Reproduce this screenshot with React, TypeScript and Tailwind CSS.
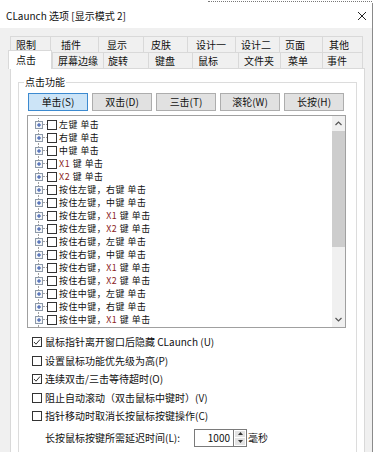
import React from 'react';

const row1 = [
  { label: '限制', cls: 'w-[40px] pl-[5px]' },
  { label: '插件', cls: 'w-[48px] pl-[10px]' },
  { label: '显示', cls: 'w-[45px] pl-[8px]' },
  { label: '皮肤', cls: 'w-[44px] pl-[7px]' },
  { label: '设计一', cls: 'w-[48px] pl-[8px]' },
  { label: '设计二', cls: 'w-[44px] pl-[5px]' },
  { label: '页面', cls: 'w-[43px] pl-[5px]' },
  { label: '其他', cls: 'w-[41px] pl-[6px] border-r' },
];

const row2 = [
  { label: '屏幕边缘', cls: 'w-[51px] pl-[5px]' },
  { label: '旋转', cls: 'w-[45px] pl-[4px]' },
  { label: '键盘', cls: 'w-[44px] pl-[6px]' },
  { label: '鼠标', cls: 'w-[46px] pl-[5px]' },
  { label: '文件夹', cls: 'w-[42px] pl-[5px]' },
  { label: '菜单', cls: 'w-[42px] pl-[7px]' },
  { label: '事件', cls: 'w-[41px] pl-[4px] border-r' },
];

const buttons = ['单击(S)', '双击(D)', '三击(T)', '滚轮(W)', '长按(H)'];

// [prefix, extra button (X1/X2) or null, rest]
const items: [string, string | null, string][] = [
  ['左键 单击', null, ''],
  ['右键 单击', null, ''],
  ['中键 单击', null, ''],
  ['', 'X1', ' 键 单击'],
  ['', 'X2', ' 键 单击'],
  ['按住左键，右键 单击', null, ''],
  ['按住左键，中键 单击', null, ''],
  ['按住左键，', 'X1', ' 键 单击'],
  ['按住左键，', 'X2', ' 键 单击'],
  ['按住右键，左键 单击', null, ''],
  ['按住右键，中键 单击', null, ''],
  ['按住右键，', 'X1', ' 键 单击'],
  ['按住右键，', 'X2', ' 键 单击'],
  ['按住中键，左键 单击', null, ''],
  ['按住中键，右键 单击', null, ''],
  ['按住中键，', 'X1', ' 键 单击'],
  ['', null, ''],
];

const options = [
  { label: '鼠标指针离开窗口后隐藏 CLaunch (U)', checked: true },
  { label: '设置鼠标功能优先级为高(P)', checked: false },
  { label: '连续双击/三击等待超时(O)', checked: true },
  { label: '阻止自动滚动（双击鼠标中键时）(V)', checked: false },
  { label: '指针移动时取消长按鼠标按键操作(C)', checked: false },
];

function CheckBox({ checked }: { checked?: boolean }) {
  return (
    <div className="w-[10px] h-[10px] border border-[#333333] bg-white flex items-center justify-center shrink-0">
      {checked && (
        <svg width="8" height="8" viewBox="0 0 8 8">
          <polyline points="1,4 3,6.2 7,1.5" fill="none" stroke="#333" strokeWidth="1" />
        </svg>
      )}
    </div>
  );
}

function TreeRow({ item }: { item: [string, string | null, string] }) {
  const [pre, x, rest] = item;
  const empty = !pre && !x && !rest;
  return (
    <div className="h-[13px] flex items-center">
      <div className="ml-[7px] w-[8px] h-full relative flex items-center shrink-0">
        <div className="absolute left-[3px] top-0 bottom-0 border-l border-dotted border-[#a0a0a0]" />
        <div className="relative w-[8px] h-[8px] border border-[#8e9aa8] bg-[#f4f6f8] flex items-center justify-center">
          <svg width="6" height="6" viewBox="0 0 6 6">
            <path d="M1 3H5M3 1V5" stroke="#2b4fa8" strokeWidth="1" />
          </svg>
        </div>
      </div>
      <div className="w-[4px] border-t border-dotted border-[#a0a0a0]" />
      <CheckBox />
      {!empty && (
        <span className="block ml-[2px] h-[13px] text-[8.9px] tracking-[0.55px] leading-[13px] whitespace-nowrap">
          {pre}
          {x && <span className="text-[#8a2222]">{x}</span>}
          {rest}
        </span>
      )}
    </div>
  );
}

export default function App() {
  return (
    <div className="w-[375px] h-[452px] overflow-hidden bg-white text-[#111] font-['Noto_Sans_CJK_SC','Noto_Sans',sans-serif]">
      <div className="h-[3px] bg-white pt-[1px]">
        <div className="ml-[208px] w-[164px] border-t border-dotted border-[#777]" />
      </div>
      <div className="w-[373px] h-[449px] bg-[#f0f0f0] border-r border-[#8a8a8a] flex flex-col">
        {/* title bar */}
        <div className="h-[25px] bg-white flex items-center justify-between pl-[6px] pr-[5px] shrink-0">
          <span className="text-[10px] leading-none">CLaunch 选项 [显示模式 2]</span>
          <svg width="10" height="10" viewBox="0 0 10 10">
            <path d="M1 1L9 9M9 1L1 9" stroke="#222" strokeWidth="1" />
          </svg>
        </div>

        <div className="pt-[8px] pl-[10px]">
          {/* tabs */}
          <div className="flex h-[16px]">
            {row1.map((t) => (
              <div
                key={t.label}
                className={t.cls + ' h-full border-t border-l border-[#d9d9d9] bg-[#f0f0f0] flex items-center text-[10px] leading-none'}
              >
                {t.label}
              </div>
            ))}
          </div>
          <div className="flex h-[16px]">
            <div className="relative z-10 -ml-[2px] -mt-[2px] w-[44px] h-[19px] bg-white border-t border-l border-r border-[#d9d9d9] pl-[7px] flex items-center text-[10px] leading-none">
              点击
            </div>
            {row2.map((t) => (
              <div
                key={t.label}
                className={t.cls + ' h-full border-t border-l border-[#d9d9d9] bg-[#f0f0f0] flex items-center text-[10px] leading-none'}
              >
                {t.label}
              </div>
            ))}
          </div>

          {/* tab page */}
          <div className="w-[355px] h-[400px] bg-white border border-[#d9d9d9] pt-[8px] pl-[7px]">
            <fieldset className="w-[339px] h-[380px] border border-[#dcdcdc]">
              <legend className="ml-[5px] px-[1px] text-[10px] leading-[10px]">点击功能</legend>

              <div className="flex gap-[4px] ml-[9px] mt-[6px]">
                {buttons.map((b, i) => (
                  <div
                    key={b}
                    className={
                      (i === 0 ? 'bg-[#cce4f7] border-[#3c8ad0]' : 'bg-[#e1e1e1] border-[#adadad]') +
                      ' w-[60px] h-[18px] border flex items-center justify-center text-[10px] leading-none'
                    }
                  >
                    {b}
                  </div>
                ))}
              </div>

              {/* tree list */}
              <div className="ml-[8px] mt-[4px] w-[319px] h-[213px] border border-[#a0a0a0] flex">
                <div className="flex-1 overflow-hidden pt-[2px]">
                  {items.map((it, i) => (
                    <TreeRow key={i} item={it} />
                  ))}
                </div>
                <div className="w-[13px] bg-[#f0f0f0] flex flex-col shrink-0">
                  <div className="h-[15px] flex items-center justify-center">
                    <svg width="7" height="5" viewBox="0 0 7 5">
                      <polyline points="0.5,4 3.5,1 6.5,4" fill="none" stroke="#555" strokeWidth="1.2" />
                    </svg>
                  </div>
                  <div className="h-[116px] bg-[#cdcdcd]" />
                  <div className="flex-1" />
                  <div className="h-[15px] flex items-center justify-center">
                    <svg width="7" height="5" viewBox="0 0 7 5">
                      <polyline points="0.5,1 3.5,4 6.5,1" fill="none" stroke="#555" strokeWidth="1.2" />
                    </svg>
                  </div>
                </div>
              </div>

              {/* options */}
              <div className="mt-[5px] ml-[13px] flex flex-col">
                {options.map((o) => (
                  <div key={o.label} className="h-[18.5px] flex items-center">
                    <CheckBox checked={o.checked} />
                    <span className="ml-[3px] text-[10px] leading-none whitespace-nowrap">{o.label}</span>
                  </div>
                ))}
                <div className="mt-[3px] h-[18px] flex items-center">
                  <span className="ml-[13px] w-[149px] text-[10px] leading-none whitespace-nowrap">长按鼠标按键所需延迟时间(L):</span>
                  <div className="w-[39px] h-[18px] border-t border-l border-b border-[#7a7a7a] bg-white flex items-center justify-end pr-[3px] text-[10px] leading-none">
                    1000
                  </div>
                  <div className="w-[14px] h-[18px] border border-[#7a7a7a] bg-white flex flex-col gap-[1px] p-[1px]">
                    <div className="flex-1 bg-[#e3e3e3] flex items-center justify-center">
                      <svg width="5" height="3" viewBox="0 0 5 3">
                        <polygon points="0,3 2.5,0 5,3" fill="#333" />
                      </svg>
                    </div>
                    <div className="flex-1 bg-[#e3e3e3] flex items-center justify-center">
                      <svg width="5" height="3" viewBox="0 0 5 3">
                        <polygon points="0,0 2.5,3 5,0" fill="#333" />
                      </svg>
                    </div>
                  </div>
                  <span className="ml-[1px] text-[10px] leading-none whitespace-nowrap">毫秒</span>
                </div>
              </div>
            </fieldset>
          </div>
        </div>
      </div>
    </div>
  );
}
